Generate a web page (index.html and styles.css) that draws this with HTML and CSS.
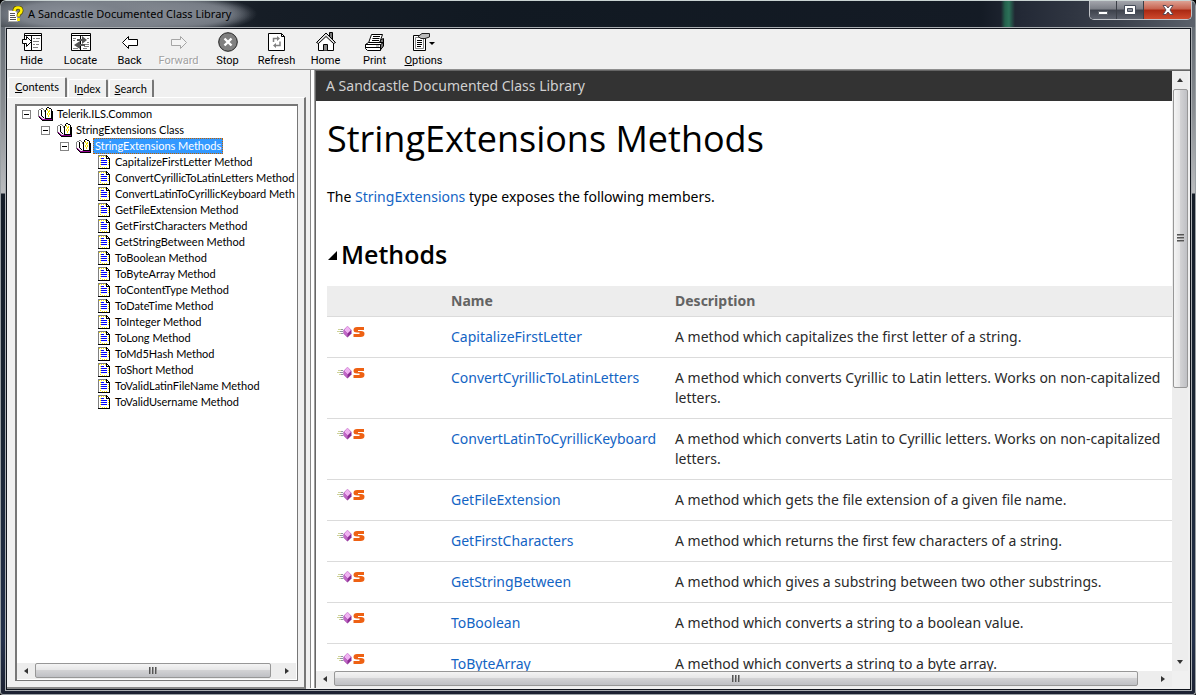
FILE: index.html
```html
<!DOCTYPE html>
<html lang="en">
<head>
<meta charset="utf-8">
<title>A Sandcastle Documented Class Library</title>
<link rel="stylesheet" href="styles.css">
</head>
<body>
<svg class="defs" width="0" height="0" aria-hidden="true">
  <symbol id="book" viewBox="0 0 16 16">
    <path d="M1 4V11L6 15H15V5Z" fill="#800080"/>
    <path d="M1 3H3V10L6 12V14L1 10Z" fill="#fff"/>
    <path d="M3 2H5L7 5V13L3 10Z" fill="#fff"/>
    <path d="M7 4L9 2H13V13H7Z" fill="#fff"/>
    <path d="M0 4h1v7H0zM1 3h2v1H1zM3 2h2v1H3zM5 3h1v1H5zM6 4h1v2H6z" fill="#808080"/>
    <path d="M3 4h1v6H3zM4 10h1v1H4zM5 11h1v1H5zM7 4h1v9H7zM8 2h1v2H8zM9 1h2v1H9zM11 2h2v1h-2zM13 3h1v10h-1zM8 12h5v1H8zM1 11h1v1H1zM2 12h1v1H2zM3 13h1v1H3zM4 14h11v1H4zM14 5h1v10h-1z" fill="#000"/>
    <path d="M1 10h1v1H1zM2 11h1v1H2zM3 12h1v1H3zM4 13h10v1H4z" fill="#900090"/>
    <path d="M9 3h1v2H9zM11 4h1v2h-1zM10 5h1v2h-1zM9 7h1v2H9zM11 7h1v2h-1zM10 9h1v2h-1z" fill="#f0e000"/>
  </symbol>
  <symbol id="page" viewBox="0 0 16 16">
    <path d="M3 1H11L14 4V15H3Z" fill="#fff"/>
    <path d="M3 2h1v1H3zM5 2h1v1H5zM7 2h1v1H7zM9 2h1v1H9zM4 4h1v1H4zM4 6h1v1H4zM4 8h1v1H4zM4 10h1v1H4zM4 12h1v1H4zM12 6h1v1h-1zM12 8h1v1h-1zM12 10h1v1h-1zM6 13h1v1H6zM8 13h1v1H8zM10 13h1v1h-1z" fill="#ffe800"/>
    <path d="M2 1h9v1H2zM2 1h1v13H2z" fill="#808080"/>
    <path d="M10 1h1v4h-1zM11 2h1v1h-1zM12 3h1v1h-1zM10 4h4v1h-4zM13 4h1v11h-1zM2 14h12v1H2z" fill="#000"/>
    <path d="M5 4h3v1H5zM5 6h6v1H5zM5 8h6v1H5zM5 10h6v1H5z" fill="#0000ff"/>
  </symbol>
  <symbol id="method" viewBox="0 0 28 14">
    <path d="M1 4.500h5M0 6.500h5M2 8.500h4" stroke="#cfd39a"/>
    <path d="M4 4.500h2M3 6.500h3M4 8.500h2" stroke="#8e94a0"/>
    <path d="M10.500 1L14.500 5V8.500L10.500 12.500L6.500 8.500V5Z" fill="#8b2c93"/>
    <path d="M10.500 1L14 5L10.500 8.500L7 5Z" fill="#f0b2f2"/>
    <path d="M7 5L10.500 8.500V12L7 8.500Z" fill="#c267c8"/>
    <path d="M27 2H20Q16.500 2 16.500 5Q16.500 7.500 20 7.500H22.500V9H16.500V12H23.500Q27.500 12 27.500 8.700Q27.500 6 24 6H21V5H27Z" fill="#ee6113"/>
  </symbol>
</svg>
<div class="window">
  <header class="titlebar">
    <svg class="app-icon" width="17" height="17" viewBox="0 0 17 17" aria-hidden="true">
      <path d="M1.500 4.500H8L10.500 7V15.500H1.500Z" fill="#fff" stroke="#aaa"/>
      <path d="M3 7.500h5M3 9.500h5M3 11.500h6M3 13.500h6" stroke="#555"/>
      <path d="M7.500 5Q7.500 1.500 11 1.500Q14.500 1.500 14.500 4.500Q14.500 6.500 12.500 7.500Q11.500 8.200 11.500 10.500" fill="none" stroke="#554d00" stroke-width="4"/>
      <path d="M7.500 5Q7.500 1.500 11 1.500Q14.500 1.500 14.500 4.500Q14.500 6.500 12.500 7.500Q11.500 8.200 11.500 10.500M11.500 12v3" fill="none" stroke="#ffee00" stroke-width="2.600"/>
    </svg>
    <span class="caption">A Sandcastle Documented Class Library</span>
    <div class="window-buttons">
      <button class="wb" aria-label="Minimize"><svg width="12" height="12" viewBox="0 0 12 12"><path d="M1.500 7.500h9v3h-9z" fill="#fff" stroke="#5b6068"/></svg></button>
      <button class="wb" aria-label="Maximize"><svg width="12" height="12" viewBox="0 0 12 12"><path d="M.5 1.500h11v9H.5z" fill="#fff" stroke="#444b58"/><path d="M3.500 4.500h5v3h-5z" fill="#8a8e98" stroke="#444b58"/></svg></button>
      <button class="wb close" aria-label="Close"><svg width="12" height="12" viewBox="0 0 12 12"><path d="M1 1.500H4L6 4L8 1.500H11L8 6L11 10.500H8L6 8L4 10.500H1L4 6Z" fill="#fff" stroke="#5a4a55"/></svg></button>
    </div>
  </header>
  <div class="client">
    <nav class="toolbar" aria-label="Toolbar">
      <button class="tool"><svg width="20" height="20" viewBox="0 0 20 20"><path d="M2.500 1.500h17v17h-17z" fill="#fff" stroke="#000"/><path d="M2 3.500h17" stroke="#000"/><path d="M9.500 4v14" stroke="#000"/><path d="M11 6.500h2M14 6.500h4M11 9.500h6M11 12.500h2M14 12.500h3M11 15.500h5" stroke="#808080"/><path d="M.5 7.500H4.500V4.500L9.500 9.500L4.500 14.500V11.500H.5Z" fill="#fff" stroke="#000"/></svg><span>Hide</span></button>
      <button class="tool"><svg width="20" height="20" viewBox="0 0 20 20"><path d="M.5 1.500h19v17H.5z" fill="#fff" stroke="#000"/><path d="M0 3.500h19M9.500 4v14" stroke="#000"/><path d="M2 6.500h3M2 8.500h2M12 12.500h6M13 14.500h5M12 16.500h4M16 6.500h2M16 10.500h2M2 16.500h5" stroke="#808080"/><path d="M6 7h5V4l5 4-5 4V9H6zM14 12H9V9l-6 4 6 4v-3h5z" fill="#555"/></svg><span>Locate</span></button>
      <button class="tool"><svg width="20" height="20" viewBox="0 0 20 20"><path d="M2.500 10.500L8.500 4.500V7.500H17.500V13.500H8.500V16.500Z" fill="#fff" stroke="#000"/></svg><span>Back</span></button>
      <button class="tool" disabled><svg width="20" height="20" viewBox="0 0 20 20"><path d="M17.500 10.500L11.500 4.500V7.500H2.500V13.500H11.500V16.500Z" fill="#f4f4f4" stroke="#a5a5a5"/></svg><span>Forward</span></button>
      <button class="tool"><svg width="20" height="20" viewBox="0 0 20 20"><circle cx="10" cy="10" r="9.300" fill="#808080" stroke="#222"/><path d="M6.500 6.500l7 7M13.500 6.500l-7 7" stroke="#fff" stroke-width="2.400"/></svg><span>Stop</span></button>
      <button class="tool"><svg width="20" height="20" viewBox="0 0 20 20"><path d="M1.500 1.500H14.500L17.500 4.500V18.500H1.500Z" fill="#fff" stroke="#000"/><path d="M14.500 1.500V4.500H17.500" fill="none" stroke="#000"/><path d="M6.500 10V6.500H11M13 9.500V13.500H9" fill="none" stroke="#808080" stroke-width="1.500"/><path d="M10 4l3 2.500L10 9zM9 11l-3 2.500L9 16z" fill="#808080"/></svg><span>Refresh</span></button>
      <button class="tool"><svg width="20" height="20" viewBox="0 0 20 20"><path d="M13.500 6V.5H16.500V9" fill="#777" stroke="#000"/><path d="M2.500 10V18.500H17.500V10L10 3Z" fill="#fff" stroke="#000"/><path d="M.5 10.500L10 1L19.500 10.500L17.500 11.500L10 4.500L2.500 11.500Z" fill="#ddd" stroke="#000"/><path d="M7.500 18.500V12.500H11.500V18.500" fill="#888" stroke="#000"/></svg><span>Home</span></button>
      <button class="tool"><svg width="20" height="20" viewBox="0 0 20 20"><path d="M15 8L18.500 6.500V14L15 18.500Z" fill="#777" stroke="#000"/><path d="M3.500 11L6.500 2.500H17.500L14.500 11Z" fill="#fff" stroke="#000"/><path d="M8 4.500h7M7.500 6.500h7M7 8.500h7" stroke="#000"/><path d="M.5 12.500L3.500 10.500H18.500L15.500 12.500V18.500H2.500L.5 16.500Z" fill="#fff" stroke="#000"/><path d="M.5 12.500H15.500M1 15.500H15" stroke="#000"/><path d="M11 14h3" stroke="#888"/></svg><span>Print</span></button>
      <button class="tool"><svg width="22" height="20" viewBox="0 0 22 20"><path d="M.5 3.500H12.500V18.500H.5Z" fill="#fff" stroke="#000"/><path d="M2.500 5.500h8v11h-8z" fill="none" stroke="#888"/><path d="M4 8.500h5M4 10.500h5M4 12.500h5M4 14.500h4" stroke="#000"/><path d="M5 4.500L9 1.500H16.500V5L12 6.500H8Z" fill="#bbb" stroke="#222"/><path d="M16 10h6l-3 3z" fill="#000"/></svg><span><u>O</u>ptions</span></button>
    </nav>
    <div class="panes">
      <aside class="nav-pane">
        <div class="tabs" role="tablist">
          <button class="tab active" role="tab" aria-selected="true"><u>C</u>ontents</button>
          <button class="tab" role="tab">I<u>n</u>dex</button>
          <button class="tab" role="tab"><u>S</u>earch</button>
        </div>
        <div class="tab-panel">
          <div class="tree-box">
            <ul class="tree">
              <li class="l1"><button class="toggle" aria-label="Collapse"></button><svg class="ti"><use href="#book"/></svg><span>Telerik.ILS.Common</span></li>
              <li class="l2"><button class="toggle" aria-label="Collapse"></button><svg class="ti"><use href="#book"/></svg><span>StringExtensions Class</span></li>
              <li class="l3"><button class="toggle" aria-label="Collapse"></button><svg class="ti"><use href="#book"/></svg><span class="selected">StringExtensions Methods</span></li>
              <li class="leaf"><svg class="ti"><use href="#page"/></svg><span>CapitalizeFirstLetter Method</span></li>
              <li class="leaf"><svg class="ti"><use href="#page"/></svg><span>ConvertCyrillicToLatinLetters Method</span></li>
              <li class="leaf"><svg class="ti"><use href="#page"/></svg><span>ConvertLatinToCyrillicKeyboard Method</span></li>
              <li class="leaf"><svg class="ti"><use href="#page"/></svg><span>GetFileExtension Method</span></li>
              <li class="leaf"><svg class="ti"><use href="#page"/></svg><span>GetFirstCharacters Method</span></li>
              <li class="leaf"><svg class="ti"><use href="#page"/></svg><span>GetStringBetween Method</span></li>
              <li class="leaf"><svg class="ti"><use href="#page"/></svg><span>ToBoolean Method</span></li>
              <li class="leaf"><svg class="ti"><use href="#page"/></svg><span>ToByteArray Method</span></li>
              <li class="leaf"><svg class="ti"><use href="#page"/></svg><span>ToContentType Method</span></li>
              <li class="leaf"><svg class="ti"><use href="#page"/></svg><span>ToDateTime Method</span></li>
              <li class="leaf"><svg class="ti"><use href="#page"/></svg><span>ToInteger Method</span></li>
              <li class="leaf"><svg class="ti"><use href="#page"/></svg><span>ToLong Method</span></li>
              <li class="leaf"><svg class="ti"><use href="#page"/></svg><span>ToMd5Hash Method</span></li>
              <li class="leaf"><svg class="ti"><use href="#page"/></svg><span>ToShort Method</span></li>
              <li class="leaf"><svg class="ti"><use href="#page"/></svg><span>ToValidLatinFileName Method</span></li>
              <li class="leaf"><svg class="ti"><use href="#page"/></svg><span>ToValidUsername Method</span></li>
            </ul>
            <div class="hscroll">
              <button class="arrow left" aria-label="Scroll left"></button>
              <div class="track"><div class="thumb nav-thumb"><i class="grip"></i></div></div>
              <button class="arrow right" aria-label="Scroll right"></button>
            </div>
          </div>
        </div>
      </aside>
      <div class="splitter"></div>
      <main class="doc-pane">
        <div class="doc-body">
          <div class="doc">
            <div class="doc-header">A Sandcastle Documented Class Library</div>
            <article class="topic">
              <h1>StringExtensions Methods</h1>
              <p>The <a href="#type">StringExtensions</a> type exposes the following members.</p>
              <h2><svg width="11" height="11" viewBox="0 0 11 11" aria-hidden="true"><path d="M1 11H10V2Z" fill="#000"/></svg>Methods</h2>
              <table>
                <thead><tr><th class="c-icon"></th><th class="c-name">Name</th><th>Description</th></tr></thead>
                <tbody>
                  <tr><td><svg class="mi"><use href="#method"/></svg></td><td><a href="#m1">CapitalizeFirstLetter</a></td><td>A method which capitalizes the first letter of a string.</td></tr>
                  <tr><td><svg class="mi"><use href="#method"/></svg></td><td><a href="#m2">ConvertCyrillicToLatinLetters</a></td><td>A method which converts Cyrillic to Latin letters. Works on non-capitalized letters.</td></tr>
                  <tr><td><svg class="mi"><use href="#method"/></svg></td><td><a href="#m3">ConvertLatinToCyrillicKeyboard</a></td><td>A method which converts Latin to Cyrillic letters. Works on non-capitalized letters.</td></tr>
                  <tr><td><svg class="mi"><use href="#method"/></svg></td><td><a href="#m4">GetFileExtension</a></td><td>A method which gets the file extension of a given file name.</td></tr>
                  <tr><td><svg class="mi"><use href="#method"/></svg></td><td><a href="#m5">GetFirstCharacters</a></td><td>A method which returns the first few characters of a string.</td></tr>
                  <tr><td><svg class="mi"><use href="#method"/></svg></td><td><a href="#m6">GetStringBetween</a></td><td>A method which gives a substring between two other substrings.</td></tr>
                  <tr><td><svg class="mi"><use href="#method"/></svg></td><td><a href="#m7">ToBoolean</a></td><td>A method which converts a string to a boolean value.</td></tr>
                  <tr><td><svg class="mi"><use href="#method"/></svg></td><td><a href="#m8">ToByteArray</a></td><td>A method which converts a string to a byte array.</td></tr>
                </tbody>
              </table>
            </article>
          </div>
          <div class="vscroll">
            <button class="arrow up" aria-label="Scroll up"></button>
            <div class="track"><div class="thumb doc-vthumb"><i class="grip"></i></div></div>
            <button class="arrow down" aria-label="Scroll down"></button>
          </div>
        </div>
        <div class="hscroll doc-hscroll">
          <button class="arrow left" aria-label="Scroll left"></button>
          <div class="track"><div class="thumb doc-hthumb"><i class="grip"></i></div></div>
          <button class="arrow right" aria-label="Scroll right"></button>
        </div>
      </main>
    </div>
  </div>
</div>
</body>
</html>
```
FILE: styles.css
```css
* { box-sizing: border-box; }
html, body { height: 100%; margin: 0; }
body { overflow: hidden; background: #000; font-family: "Noto Sans", "Open Sans", sans-serif; }
button { font: inherit; color: inherit; border: 0; padding: 0; background: none; }
.defs { position: absolute; }

/* Window frame */
.window {
  height: 100vh;
  display: flex;
  flex-direction: column;
  padding: 0 3px 4px 4px;
  border: 1px solid #9aa0a4;
  border-top: 1px solid #c9d3d2;
  border-radius: 6px 6px 3px 3px;
  background: linear-gradient(#59616a 0, #8a8e93 110px, #b9bbbe 192px, #141c28 193px, #1a2533 420px, #23304a 640px, #1d2232 100%);
}
.titlebar {
  height: 26px;
  flex: none;
  display: flex;
  align-items: center;
  margin: 0 -3px 0 -4px;
  padding-left: 6px;
  border-radius: 5px 5px 0 0;
  background:
    linear-gradient(90deg, transparent 1000px, #24604c 1004px, #2c7259 1008px, transparent 1014px),
    radial-gradient(ellipse 90px 20px at 70px 13px, #8b919a 0, #7b818a 60%, transparent 100%),
    radial-gradient(ellipse 120px 20px at 130px 13px, #868b93 0, #7b818a 60%, transparent 100%),
    radial-gradient(ellipse 70px 18px at 186px 13px, #868b93 0, #6d737c 60%, transparent 100%),
    linear-gradient(90deg, #4d535a 0, #161d26 260px, #111922 500px, #141b25 980px, #232936 1020px, #3b414c 1120px, #5b616b 100%);
}
.caption { flex: 1; margin-left: 4px; font-size: 11px; line-height: 16px; color: #000; }
.window-buttons {
  align-self: flex-start;
  display: flex;
  height: 19px;
  margin-right: 3px;
  border: 1px solid #c0c3c8;
  border-top: 0;
  border-radius: 0 0 5px 5px;
  overflow: hidden;
}
.wb {
  width: 27px;
  display: grid;
  place-items: center;
  border-right: 1px solid #3b3f47;
  background: linear-gradient(#a3a5ac 0, #7b7e86 45%, #3d414b 50%, #5d626d 100%);
}
.wb.close { width: 47px; border-right: 0; background: linear-gradient(#dda193 0, #c7614d 45%, #a92812 50%, #cf4a2d 100%); }
.client {
  flex: 1;
  min-height: 0;
  display: flex;
  flex-direction: column;
  border: 1px solid #10141c;
  outline: 1px solid #a9adb1;
  margin: 1px 1px 0 1px;
  background: #f0f0f0;
}

/* Toolbar */
.toolbar {
  flex: none;
  display: flex;
  height: 41px;
  border-bottom: 1px solid #8f8f8f;
  font: 11px/14px Roboto, "Liberation Sans", sans-serif;
}
.tool { width: 49px; display: flex; flex-direction: column; align-items: center; padding-top: 3px; color: #000; }
.tool svg { margin-bottom: 2px; }
.tool:disabled { color: #a0a0a0; text-shadow: 1px 1px #fff; }

/* Navigation pane */
.panes { flex: 1; min-height: 0; display: flex; }
.nav-pane {
  width: 299px;
  flex: none;
  display: flex;
  flex-direction: column;
  font: 11px/16px Lato, "Liberation Sans", sans-serif;
  color: #000;
}
.tabs { display: flex; align-items: flex-end; height: 27px; padding-left: 1px; gap: 1px; }
.tab { height: 18px; padding: 0 5px; border-left: 1px solid #fff; border-top: 1px solid #fff; border-right: 2px solid #777; border-radius: 2px 2px 0 0; }
.tab.active { height: 20px; padding: 0 6px 2px; }
.tab-panel {
  flex: 1;
  min-height: 0;
  display: flex;
  padding: 6px 6px 6px 8px;
  border: 1px solid #fff;
  border-left: 0;
  border-right: 2px solid #777;
  border-bottom: 2px solid #888;
}
.tree-box {
  flex: 1;
  min-width: 0;
  display: flex;
  flex-direction: column;
  padding-right: 1px;
  padding-bottom: 1px;
  background: #fff;
  border: 2px solid #777;
  border-right: 1px solid #777;
  border-bottom: 1px solid #777;
}
.tree { flex: 1; min-height: 0; overflow: hidden; list-style: none; margin: 0 1px; padding: 0; }
.tree li { display: flex; align-items: center; height: 16px; white-space: nowrap; }
.l1 { padding-left: 4px; }
.l2 { padding-left: 23px; }
.l3 { padding-left: 42px; }
.leaf { padding-left: 78px; }
.toggle {
  width: 9px;
  height: 9px;
  flex: none;
  margin-right: 7px;
  border: 1px solid #848484;
  background: linear-gradient(#000, #000) center / 5px 1px no-repeat #fff;
}
.ti { width: 16px; height: 16px; flex: none; margin-right: 1px; }
.tree span { padding: 0 2px; line-height: 16px; }
.tree .selected { background: #3399ff; color: #fff; outline: 1px dotted #c06000; outline-offset: -1px; }

/* Scroll bars */
.hscroll { flex: none; display: flex; height: 16px; background: #ededed; }
.vscroll { flex: none; display: flex; flex-direction: column; width: 16px; background: #ededed; }
.track { flex: 1; min-width: 0; min-height: 0; }
.arrow { flex: none; width: 18px; height: 18px; display: grid; place-items: center; }
.hscroll .arrow { height: 16px; }
.vscroll .arrow { width: 16px; }
.arrow::before { content: ""; border: 3px solid transparent; }
.left::before { border-right: 4px solid #333; border-left: 0; }
.right::before { border-left: 4px solid #333; border-right: 0; }
.up::before { border-bottom: 4px solid #333; border-top: 0; }
.down::before { border-top: 4px solid #333; border-bottom: 0; }
.thumb { display: grid; place-items: center; border: 1px solid #979797; border-radius: 2px; }
.hscroll .thumb { height: 15px; background: linear-gradient(#f4f4f4 0, #e6e6e7 45%, #d2d2d4 50%, #bfc0c4 100%); }
.vscroll .thumb { width: 15px; margin-left: 1px; background: linear-gradient(90deg, #f4f4f4 0, #e6e6e7 45%, #d2d2d4 50%, #bfc0c4 100%); }
.hscroll .grip { width: 8px; height: 7px; background: repeating-linear-gradient(90deg, #555 0 1px, #999 1px 2px, transparent 2px 3px); }
.vscroll .grip { width: 7px; height: 8px; background: repeating-linear-gradient(#555 0 1px, #999 1px 2px, transparent 2px 3px); }
.nav-thumb { width: 97%; }
.doc-hscroll { margin-right: 16px; }
.doc-hthumb { width: 98%; }
.doc-vthumb { height: 53%; }

/* Splitter and topic pane */
.splitter { width: 10px; flex: none; margin-bottom: 1px; background: linear-gradient(90deg, #f0f0f0 0 4px, #888 4px 5px, #fff 5px 8px, #a0a0a0 8px 9px, #666 9px 10px); }
.doc-pane { flex: 1; min-width: 0; display: flex; flex-direction: column; padding: 0 2px 2px 0; border-top: 1px solid #666; }
.doc-body { flex: 1; min-height: 0; display: flex; background: #fff; }
.doc { flex: 1; min-width: 0; overflow: hidden; }
.doc-header { background: #333; color: #d0d0d0; font-size: 14px; line-height: 30px; }
.doc-header { padding-left: 10px; }
.topic { padding-left: 11px; font-size: 14px; line-height: 20px; color: #2a2a2a; }
h1 { margin: 13px 0 23px; font: 400 36px/50px "Open Sans", "Noto Sans", sans-serif; color: #000; }
p { margin: 0; color: #000; }
h2 { margin: 32px 0 17px; display: flex; align-items: center; gap: 3px; font: 600 25px/30px "Open Sans", "Noto Sans", sans-serif; color: #000; }
a { color: #1364c4; text-decoration: none; }
table { width: 100%; table-layout: fixed; border-collapse: collapse; }
th, td { padding: 10px 0 10px 10px; text-align: left; vertical-align: top; border-bottom: 1px solid #dbdbdb; }
td:last-child { padding-right: 4px; }
th { height: 30px; padding-top: 5px; padding-bottom: 4px; background: #ededed; color: #636363; font-weight: 700; }
.c-icon { width: 114px; }
.c-name { width: 224px; }
.mi { display: block; width: 28px; height: 14px; margin-top: -2px; }
```
